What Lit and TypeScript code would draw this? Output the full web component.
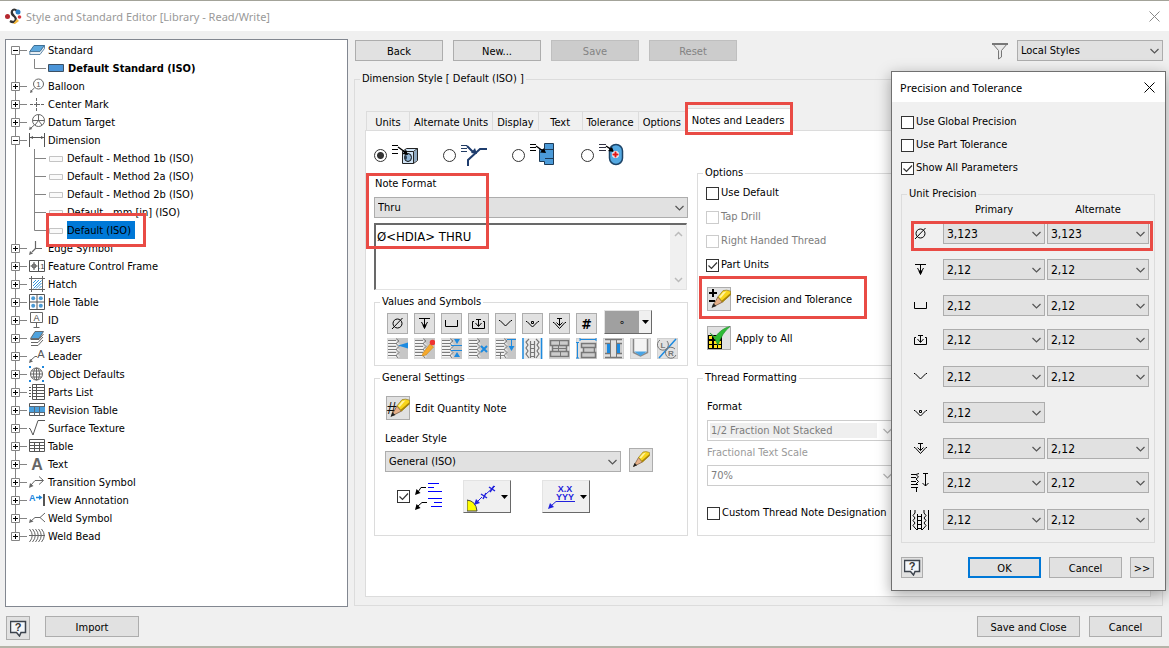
import { LitElement, html, svg, css, nothing } from "lit";
import { customElement, property } from "lit/decorators.js";
import { classMap } from "lit/directives/class-map.js";

/* ---------- icon artwork ---------- */

const treeIcons: Record<string, unknown> = {
  standard: svg`<path d="M5 3.5H15.5L11 9.5H.8Z" fill="#5ea8dd" stroke="#3c6f96"/><path d="M.8 9.5V12.5H11L15.5 6.5V3.5L11 9.5Z" fill="#e8eef3" stroke="#3c6f96" stroke-width=".8"/>`,
  balloon: svg`<g fill="none" stroke="#666"><circle cx="9.5" cy="6" r="5"/><path d="M5.6 9.8L2 13.2"/></g><path d="M1 15l.7-3.3 2.2 2.2z" fill="#666"/><text x="9.5" y="9" text-anchor="middle" font-size="8" fill="#555">1</text>`,
  center: svg`<path d="M1 8.5H4M5 8.5H11M12 8.5H15M7.500 2V5M7.500 6V11M7.500 12V15" stroke="#666" fill="none"/>`,
  datum: svg`<g fill="none" stroke="#666"><circle cx="9.500" cy="6.500" r="6"/><path d="M3.500 6.500H15.500M9.500 .5V6.500L6 11M9.500 6.500L13 11M5.300 11L2 14"/></g><path d="M0 16l.8-3.500 2.400 2.400z" fill="#666"/>`,
  dimension: svg`<path d="M.5 1V15M15.500 1V15M1 5.500H15" stroke="#555" fill="none"/><path d="M1 5.500l3-1.500v3zM15 5.500l-3-1.500v3z" fill="#555"/>`,
  edge: svg`<path d="M6.500 1V8.500H13M6.500 8.500L3 12" stroke="#666" fill="none" stroke-width="1.200"/><path d="M0 15l1-4 3 2.600z" fill="#666"/>`,
  feature: svg`<path d="M.5 2.500H15.500V13.500H.5ZM9.500 2.500V13.500" stroke="#555" fill="#fff"/><path d="M5 4V12M1.500 8H8.500" stroke="#555"/><circle cx="5" cy="8" r="2" fill="none" stroke="#555"/><text x="9" y="11" font-size="8" fill="#444">.1</text>`,
  hatch: svg`<path d="M2.500 0V16M13.500 0V16M0 2.500H16M0 13.500H16" stroke="#666" fill="none"/><path d="M4 7l3-3M4 10l6-6M4.500 12.500l8-8M7 12.500L12.500 7M10 12.500L12.500 10" stroke="#2d93dc"/>`,
  hole: svg`<path d="M.5 .5H15.500V15.500H.5ZM8 .5V15.500M.5 8H15.500" stroke="#555" fill="#fff"/><g fill="#4a9ad6"><circle cx="4.200" cy="4.200" r="2"/><circle cx="11.800" cy="4.200" r="2"/><circle cx="4.200" cy="11.800" r="2"/><circle cx="11.800" cy="11.800" r="2"/></g>`,
  id: svg`<path d="M1.500 .5H13.500V10.500H1.500ZM7.500 10.500V15M4.500 15.500H10.500" stroke="#666" fill="none"/><text x="7.500" y="9" text-anchor="middle" font-size="9" fill="#444">A</text>`,
  layers: svg`<path d="M2 12.500H9L14 7M2 15.500H9L14 10" fill="none" stroke="#666"/><path d="M6 1.500H14.500L10 8.500H1.500Z" fill="#4fa3de" stroke="#555" stroke-width=".8"/><path d="M1.500 9.500H10L14.500 4" fill="none" stroke="#666"/>`,
  leader: svg`<path d="M2 12L6 8.500H8" stroke="#666" fill="none"/><path d="M0 15l1-4 3 2.600z" fill="#666"/><text x="12" y="10" text-anchor="middle" font-size="11" fill="#555">A</text>`,
  object: svg`<g fill="none" stroke="#666"><circle cx="7.500" cy="8" r="6"/><ellipse cx="7.500" cy="8" rx="3" ry="6"/><path d="M7.500 2V14M1.500 8H13.500M2.500 5H12.500M2.500 11H12.500"/></g><path d="M0 0h2v2H0zM13 0h2v2h-2zM0 14h2v2H0zM13 14h2v2h-2z" fill="#1c86dd"/>`,
  parts: svg`<path d="M3.500 .5H15.500V15.500H3.500ZM3.500 3.500H15.500M3.500 6.500H15.500M3.500 9.500H15.500M3.500 12.500H15.500M7.500 .5V15.500" stroke="#555" fill="#fff"/><path d="M0 3.500H2M0 6.500H2M0 9.500H2M0 12.500H2" stroke="#555"/>`,
  revision: svg`<path d="M.5 1.500H15.500V13.500H.5Z" stroke="#555" fill="#fff"/><path d="M0 5h16v5H0z" fill="#4a9fdc"/><path d="M.5 4.500H15.500M.5 10.500H15.500M5.500 4.500V13.500M10.500 4.500V13.500" stroke="#5a6a78"/>`,
  surface: svg`<path d="M0 8.500H1L4 15L9 .5H16" stroke="#555" fill="none"/>`,
  table: svg`<path d="M.5 1.500H15.500V13.500H.5ZM.5 4.500H15.500M.5 7.500H15.500M.5 10.500H15.500M5.500 4.500V13.500M10.500 4.500V13.500" stroke="#555" fill="#fff"/>`,
  text: svg`<text x="8" y="14" text-anchor="middle" font-size="16" font-weight="700" fill="#666">A</text>`,
  transition: svg`<path d="M2 11L6 6.500H14M10 2.500L14.500 6.500L10 10.500" stroke="#666" fill="none"/><path d="M0 14l1-5 3.500 3z" fill="#666"/>`,
  view: svg`<text x="0" y="9" font-size="9" font-weight="700" fill="#1c86dd">A</text><path d="M7 5.500H12" stroke="#1c86dd" stroke-width="1.500"/><path d="M10 3l3.500 2.500L10 8z" fill="#1c86dd"/><path d="M15 2V14" stroke="#555" stroke-width="2"/>`,
  weld: svg`<path d="M2 11L6 7.500H11M16 3L11 7.500L16 12" stroke="#666" fill="none"/><path d="M0 13l1-4 3.500 2.500z" fill="#666"/>`,
  bead: svg`<path d="M0 7.500H16M.5 1Q6 7.500.5 14M3.500 1Q9 7.500 3.500 14M6.500 1Q12 7.500 6.500 14M9.500 1Q15 7.500 9.500 14M12.500 1Q18 7.500 12.500 14" stroke="#666" fill="none"/>`,
  active: svg`<path d="M.5 4.500H15.500V11.500H.5Z" fill="#4a94d8" stroke="#3d5063"/>`,
  idle: svg`<path d="M1.500 6.500H14.500V11.500H1.500Z" fill="#fafafa" stroke="#c4c4c4"/>`,
};

const gdt: Record<string, unknown> = {
  diameter: svg`<circle cx="8.500" cy="8.500" r="4.500"/><path d="M3 14L13.500 3"/>`,
  depth: svg`<path d="M3 3.500H14M8.500 4V13M5.500 7L8.500 12.500L11.500 7"/><path d="M7 10h3l-1.500 3.500z" fill="#000"/>`,
  bore: svg`<path d="M2.500 5V11.500H14.500V5"/>`,
  spot: svg`<path d="M4 6.500H2.500V13.500H14.500V6.500H13M6 4.500H11M8.500 4.500V11M5.500 8L8.500 11.500L11.500 8"/>`,
  sink: svg`<path d="M2 5.500L3 5.500L8.500 11L14 5.500H15"/>`,
  near: svg`<path d="M2 6.500H3L8.500 12L14 6.500H15M7.500 6.500H9.500V8.500H7.500Z"/>`,
  sinkdepth: svg`<path d="M2 7.500H3L8.500 13.500L14 7.500H15M6 3.500H11M8.500 3.500V10.500M5.500 7.500L8.500 10.500L11.500 7.500"/>`,
  thread: svg`<path d="M1 1.500H6L9 .5M1 4.500H6M6 1.500L8.500 4L6 6L8.500 8.500L6 11M1 8.500H6M1 11.500H8M1 14.500H8M6.500 14.500V19M13 .5H18M15.500 .5V13M12.500 10L15.500 13L18.500 10"/>`,
  bolt: svg`<path d="M.5 0V20M18.500 0V20M5 0V3L3 5.500L5 8L3 10.500L5 13L3 15.500L5 18L7 20M14 0V3L16 5.500L14 8L16 10.500L14 13L16 15.500L14 18L12 20M7.500 4V20M11.500 4V20M7.500 6.500H11.500M7.500 10.500H11.500M7.500 14.500H11.500M7.500 18.500H11.500"/>`,
};

const threadBody = svg`<path d="M0 0h21v21H0z" fill="#dedede"/><path d="M10 0h11v21H10l3-2.500-3-3 3-3-3-3 3-3-3-3z" fill="#c6c6c6"/><path d="M1 3h8l2 2-2 2H1zM1 9h8l2 2-2 2H1zM1 15h8l2 2-2 2H1z" fill="#f6f6f6"/><path d="M1 2.500H9M1 5.500H10M1 8.500H9M1 11.500H10M1 14.500H9M1 17.500H10M9 .5L12 3L9 5.500L12 8.500L9 11.500L12 14.500L9 17.500L11 20" fill="none" stroke="#7c7c7c"/>`;
const blueDown = (x: number, y: number) => svg`<path d="M${x - 3} ${y}h6l-3 5z" fill="#1c8ae0"/>`;

const threadIcons = [
  svg`${threadBody}<path d="M11 7.500l10-3v6z" fill="#1c8ae0"/>`,
  svg`${threadBody}<path d="M9 15L16 6l3.500 3L12 17l-4 1z" fill="#f6a92c" stroke="#c98a1b" stroke-width=".6"/><circle cx="18.500" cy="4.500" r="2.800" fill="#e33"/>`,
  svg`${threadBody}<path d="M10 7.500H21M10 12.500H21" stroke="#1c8ae0"/>${blueDown(16, 1)}<path d="M13 19h6l-3-5z" fill="#1c8ae0"/>`,
  svg`${threadBody}<path d="M13 8l6 6M19 8l-6 6" stroke="#1c8ae0" stroke-width="2"/>`,
  svg`${threadBody}<path d="M12 1.500H21M16.500 2V10" stroke="#1c8ae0"/>${blueDown(16.5, 8)}<path d="M5.500 14V21" stroke="#777"/>`,
  svg`<path d="M0 0h21v21H0z" fill="#ececec"/><path d="M1 0V21M19.500 0V21" stroke="#1c8ae0" stroke-width="1.500"/><path d="M7 1L4 4l2 3-2 3 2 3-2 3 3 4M14 1l3 3-2 3 2 3-2 3 2 3-3 4M8.500 3v17M12.500 3v17M8 6.500H13M8 10.500H13M8 14.500H13M8 18.500H13" stroke="#777" stroke-width="1.200" fill="none"/>`,
  svg`<path d="M1.500 2.500H19.500V7.500H1.500ZM3.500 7.500H17.500V13.500H3.500ZM1.500 13.500H19.500V18.500H1.500Z" fill="#ccc" stroke="#777" stroke-width="1.500"/><path d="M10.500 3V7M9.500 8V13M11.500 14V18M4 10.500H17" stroke="#777"/>`,
  svg`<path d="M5.500 5.500H19.500V9.500H5.500ZM7.500 9.500H18.500V14.500H7.500ZM5.500 14.500H19.500V19.500H5.500Z" fill="#ccc" stroke="#777" stroke-width="1.500"/><path d="M4 1.500H20M4 0V3M20 0V3M1.500 4V20M0 4.500H3M0 20H3" stroke="#1c8ae0"/>`,
  svg`<path d="M2 1.500H19M2 5.500H7V15.500H2M19 5.500H14V15.500H19M2 19.500H19" fill="#ccc" stroke="#777" stroke-width="1.500"/><path d="M7.500 2V20M13.500 2V20" stroke="#777"/><path d="M4 6h3v9H4zM14 6h3v9h-3z" fill="#1c8ae0"/>`,
  svg`<path d="M3.500 1V14.500L10.500 18L17.500 14.500V1" fill="#f4f4f4" stroke="#888" stroke-width="1.500"/><path d="M4 13.500h13L10.500 18z" fill="#4aa4e4"/>`,
  svg`<path d="M2 20L19 1" stroke="#1c8ae0" stroke-width="1.500"/><g fill="none" stroke="#777"><path d="M3 2a5.500 5.500 0 1 0 7 1"/><path d="M18 11a5.500 5.500 0 1 0 1 6"/></g><text x="3.500" y="10" font-size="8" font-weight="700" fill="#777">L</text><text x="11" y="18" font-size="8" font-weight="700" fill="#777">R</text>`,
];

const pencil = svg`<path d="M9.500 9.500L4.500 18.500L13.500 14Z" fill="#e8b088" stroke="#7a5a3c" stroke-width=".7"/><path d="M9.500 9.500L14 4Q17 3 20.500 4.500V7.500L13.500 14Z" fill="#f8d51c" stroke="#8a7420" stroke-width=".6"/><path d="M12.500 13L20.500 6V8L13.500 14.200Z" fill="#a8850c"/><path d="M14 5.500L17 4.500L12 10.500L10.500 9.500Z" fill="#fff3a0"/><path d="M4 19l1.500-4 2.700 2.300z" fill="#222"/>`;
const bigPencil = svg`<g transform="translate(0 -1) scale(1.15)">${pencil}</g>`;

const noteTypes = [
  svg`<path d="M0 2.500H6M0 6.500H6M0 10.500H6" stroke="#000"/><path d="M10.500 8.500V20.500H21.500L25.500 17.500V5.500H14.500L10.500 8.500Z" fill="#cfe3f5" stroke="#222"/><path d="M10.500 8.500H21.500V20.500M21.500 8.500L25.500 5.500" fill="none" stroke="#222"/><path d="M22 9l3-2.500V17l-3 2.500z" fill="#8fa9c0"/><ellipse cx="16" cy="14.500" rx="3.500" ry="4" fill="#8fb4d6" stroke="#111"/><path d="M14 12a3 3 0 0 0 0 5q2-2.500 0-5z" fill="#2c3f52"/><path d="M6 4L13 9" stroke="#000" stroke-width="1.500"/><path d="M16 12l-5.500-1L14 6.500z" fill="#000"/>`,
  svg`<path d="M0 2.500H6M0 5.500H6M0 8.500H6" stroke="#223c63"/><path d="M7 23V17L19 6H26M6 3L12 9" stroke="#1f3d6e" stroke-width="2" fill="none"/><path d="M16 11l-6-1 4-5z" fill="#1f3d6e"/>`,
  svg`<path d="M14.500 .5H23.500V21.500H14.500V18.500H9.500V6.500H14.500Z" fill="#4b9ad8" stroke="#1d3a56"/><path d="M15 6.500H23M15 15.500H23" stroke="#1d3a56"/><path d="M0 1.500H6M0 4.500H6M0 7.500H6" stroke="#000"/><path d="M6 3L13 8" stroke="#000" stroke-width="1.500"/><path d="M16 10l-6-.5 4-4.500z" fill="#000"/>`,
  svg`<rect x="10.500" y="1.500" width="13" height="20" rx="6.500" fill="#54a9e2" stroke="#1d4468" stroke-width="1.500"/><path d="M0 1.500H7M0 4.500H7M0 7.500H7" stroke="#334"/><path d="M7 3L13 7" stroke="#000" stroke-width="1.500"/><path d="M15 9l-6-1 4-4z" fill="#000"/><path d="M13 11.500h7M16.500 8v7" stroke="#fff" stroke-width="4"/><path d="M13.500 11.500h6M16.500 8.500v6" stroke="#e01818" stroke-width="2"/>`,
];

const pic = (w: number, h: number, body: unknown) =>
  html`<svg width=${w} height=${h} viewBox="0 0 ${w} ${h}" aria-hidden="true">${body}</svg>`;
const sym = (name: string, w = 17, h = 17) =>
  html`<svg class="sym" width=${w} height=${h} viewBox="0 0 ${w} ${h}" aria-hidden="true">${gdt[name]}</svg>`;
const helpIcon = pic(17, 17, svg`<path d="M.5 1.500H15.500V12.500H11L9.500 16L6.500 12.500H.5Z" fill="#f3f6fa" stroke="#3c434d" stroke-width="1.500"/><text x="8" y="11" text-anchor="middle" font-size="11" font-weight="700" fill="#333">?</text>`);
const closeIcon = pic(11, 11, svg`<path d="M.5 .5L10.500 10.500M10.500 .5L.5 10.500" stroke="currentColor"/>`);
const triangle = pic(7, 4, svg`<path d="M0 0h7L3.500 4z" fill="#000"/>`);

/* ---------- shared rules ---------- */

const shared = css`
  * { box-sizing: border-box; }
  svg { display: block; flex: none; }
  svg text { font-family: "Liberation Sans", Arial, sans-serif; }
  .sym { fill: none; stroke: #000; stroke-width: 1; }
  button, input, select, textarea { font: inherit; color: inherit; margin: 0; }
  button {
    display: flex; align-items: center; justify-content: center;
    padding: 0; border: 1px solid #adadad; background: #e1e1e1; border-radius: 0;
  }
  button.word { padding-top: 2px; }
  button:disabled { background: #cccccc; border-color: #bfbfbf; color: #838383; }
  fieldset { --pad: 0px; margin: 0; min-width: 0; padding: 0 0 0 var(--pad); border: 1px solid #dcdcdc; }
  legend { margin-left: calc(5px - var(--pad)); padding: 0 2px; line-height: 14px; }
  .check { display: flex; align-items: center; gap: 2px; line-height: 14px; white-space: nowrap; }
  .check.off { color: #7d7d7d; }
  .check input, .tick {
    appearance: none; width: 13px; height: 13px; flex: none;
    border: 1px solid #333; background: #fff; border-radius: 0;
  }
  .check input:disabled { border-color: #cccccc; }
  .check input:checked, .tick:checked {
    background: #fff url("data:image/svg+xml,%3Csvg xmlns='http://www.w3.org/2000/svg' width='11' height='11'%3E%3Cpath d='M1.500 5.500L4.500 8.500L10 2.500' fill='none' stroke='%23333' stroke-width='1.200'/%3E%3C/svg%3E") center no-repeat;
  }
  .mark { position: absolute; border: 3px solid #e94b45; pointer-events: none; z-index: 2; }
`;

@customElement("combo-box")
export class ComboBox extends LitElement {
  @property() value = "";
  @property() label = "";
  @property({ type: Boolean }) off = false;
  @property({ type: Boolean }) shaded = false;

  static styles = [shared, css`
    :host { display: grid; align-items: center; height: 21px; }
    select, svg { grid-area: 1 / 1; }
    select {
      appearance: none; width: 100%; height: 100%; padding: 0 20px 0 3px;
      border: 1px solid #adadad; border-radius: 0; background: #e1e1e1; color: #000;
    }
    svg { justify-self: end; margin-right: 4px; pointer-events: none; }
    select:disabled { background: #fff; border-color: #cccccc; color: #7d7d7d; opacity: 1; }
    select.shaded:disabled { background: linear-gradient(#efefef, #efefef) 2px 2px / calc(100% - 20px) calc(100% - 4px) no-repeat #fff; }
  `];

  render() {
    return html`
      <select class=${classMap({ shaded: this.shaded })} aria-label=${this.label} ?disabled=${this.off}><option>${this.value}</option></select>
      ${pic(9, 6, svg`<path d="M.5 1L4.500 5L8.500 1" fill="none" stroke=${this.off ? "#b5b5b5" : "#555"} stroke-width="1.200"/>`)}
    `;
  }
}

/* ---------- style browser tree ---------- */

interface Branch { name: string; icon: string; children?: string[]; }

const branches: Branch[] = [
  { name: "Standard", icon: "standard", children: ["Default Standard (ISO)"] },
  { name: "Balloon", icon: "balloon" },
  { name: "Center Mark", icon: "center" },
  { name: "Datum Target", icon: "datum" },
  {
    name: "Dimension", icon: "dimension",
    children: ["Default - Method 1b (ISO)", "Default - Method 2a (ISO)", "Default - Method 2b (ISO)", "Default - mm [in] (ISO)", "Default (ISO)"],
  },
  { name: "Edge Symbol", icon: "edge" },
  { name: "Feature Control Frame", icon: "feature" },
  { name: "Hatch", icon: "hatch" },
  { name: "Hole Table", icon: "hole" },
  { name: "ID", icon: "id" },
  { name: "Layers", icon: "layers" },
  { name: "Leader", icon: "leader" },
  { name: "Object Defaults", icon: "object" },
  { name: "Parts List", icon: "parts" },
  { name: "Revision Table", icon: "revision" },
  { name: "Surface Texture", icon: "surface" },
  { name: "Table", icon: "table" },
  { name: "Text", icon: "text" },
  { name: "Transition Symbol", icon: "transition" },
  { name: "View Annotation", icon: "view" },
  { name: "Weld Symbol", icon: "weld" },
  { name: "Weld Bead", icon: "bead" },
];

@customElement("style-tree")
export class StyleTree extends LitElement {
  static styles = [shared, css`
    :host { display: block; border: 1px solid #828790; background: #fff; padding: 1px 0 0 5px; }
    ul { list-style: none; margin: 0; padding: 0; }
    .row { display: flex; align-items: center; height: 18px; white-space: nowrap; }
    .name { position: relative; padding: 2px 3px 0 0; margin-left: 3px; line-height: 16px; }
    .bold { font-weight: 700; margin-left: 4px; }
    .picked { background: #0078d7; padding-right: 4px; }
    .mark { inset: -8px -11px -8px -21px; }
  `];

  private trunk(open: boolean, first: boolean, last: boolean) {
    return pic(18, 18, svg`
      <path d="M4.500 ${first ? 9 : 0}V${last ? 9 : 18}M9 9.500H16" stroke="#848484"/>
      <path d="M.5 5.500H8.500V13.500H.5Z" fill="#fff" stroke="#848484"/>
      <path d=${open ? "M2 9.500H7" : "M2 9.500H7M4.500 7V12"} stroke="#000"/>`);
  }

  private twig(last: boolean) {
    return pic(37, 18, svg`<path d="M4.500 0V18M23.500 0V${last ? 9.5 : 18}M23.500 9.500H35" fill="none" stroke="#848484"/>`);
  }

  render() {
    return html`<ul>${branches.map((b, i) => html`
      <li>
        <div class="row">
          ${this.trunk(!!b.children, i === 0, i === branches.length - 1)}
          ${pic(16, 16, treeIcons[b.icon])}
          <span class="name">${b.name}</span>
        </div>
        ${b.children ? html`<ul>${b.children.map((c, j) => {
          const picked = c === "Default (ISO)";
          return html`<li class="row">
            ${this.twig(j === b.children!.length - 1)}
            ${pic(16, 16, treeIcons[i === 0 ? "active" : "idle"])}
            <span class=${classMap({ name: true, bold: i === 0, picked })}>${c}${picked ? html`<span class="mark"></span>` : nothing}</span>
          </li>`;
        })}</ul>` : nothing}
      </li>`)}</ul>`;
  }
}

/* ---------- notes and leaders page ---------- */

@customElement("notes-page")
export class NotesPage extends LitElement {
  static styles = [shared, css`
    :host { display: grid; grid-template-columns: 314px 210px; gap: 9px; align-items: start; padding: 11px 8px 0; }
    .column { display: flex; flex-direction: column; gap: 5px; }
    .types { display: flex; height: 26px; margin-bottom: 3px; }
    .types label { display: flex; align-items: center; gap: 5px; width: 69px; }
    .types input {
      appearance: none; width: 13px; height: 13px; border: 1px solid #333; border-radius: 50%; background: #fff;
    }
    .types input:checked { background: radial-gradient(circle, #333 0 3px, #fff 4px); }
    .format { position: relative; display: flex; flex-direction: column; gap: 5px; }
    .format > label { padding-left: 1px; line-height: 16px; }
    .format .mark { left: -8px; top: -3px; width: 123px; height: 76px; }
    .memo { display: flex; height: 67px; margin-right: 1px; border: 1px solid #e3e3e3; border-top: 2px solid #696969; border-left: 2px solid #696969; }
    .memo textarea { flex: 1; min-width: 0; border: 0; padding: 2px 1px; resize: none; outline: none; overflow: hidden; font-size: 13px; line-height: 20px; background: #fff; }
    .bar { display: flex; flex-direction: column; justify-content: space-between; align-items: center; width: 16px; padding: 6px 0; background: #f0f0f0; }
    .values { --pad: 12px; padding-top: 1px; padding-bottom: 6px; }
    .strip { display: flex; gap: 6px; align-items: end; }
    .strip + .strip { margin-top: 4px; }
    .strip button { width: 21px; height: 21px; }
    .strip button.flat { border-color: #d0d0d0; }
    .strip .hash { font-size: 14px; font-weight: 700; }
    .strip .picker { width: 48px; height: 24px; margin-left: 1px; justify-content: space-between; background: #a0a0a0; border: 1px solid #696969; border-left-color: #e3e3e3; border-top-color: #e3e3e3; }
    .picker span:first-child { flex: 1; }
    .picker span:last-child { display: grid; place-items: center; width: 12px; height: 100%; background: #f0f0f0; }
    .format > label + combo-box { margin-top: 0; }
    .general { --pad: 10px; height: 165px; }
    .tool { display: flex; align-items: center; gap: 5px; height: 24px; white-space: nowrap; }
    .tool label { line-height: 14px; padding-top: 2px; }
    .square { width: 24px; height: 24px; flex: none; }
    .general .tool { margin: 11px 0 0 1px; }
    .general .caption { display: block; margin-top: 12px; line-height: 14px; }
    .leader { display: flex; align-items: end; gap: 8px; margin-top: 2px; }
    .leader combo-box { width: 236px; }
    .arrows { display: flex; align-items: center; margin-top: 8px; padding-left: 12px; }
    .arrows svg.lines { margin-left: 4px; }
    .drop { width: 48px; height: 33px; gap: 4px; background: #f0f0f0; border: 1px solid #e3e3e3; border-right: 1px solid #696969; border-bottom: 1px solid #696969; }
    .drop.a { margin-left: 20px; }
    .drop.b { margin-left: 31px; }
    .side { padding-top: 24px; }
    .options { --pad: 8px; height: 200px; }
    .options .check, .thread .check { height: 14px; }
    .options .check + .check { margin-top: 10px; }
    .options .check:first-of-type { margin-top: 6px; }
    .options .tool { position: relative; margin: 15px 0 0 1px; }
    .options .mark { left: -8px; top: -11px; width: 168px; height: 43px; }
    .thread { --pad: 9px; height: 165px; padding-top: 15px; }
    .thread > * { width: 189px; }
    .thread legend { width: auto; }
    .thread span { display: block; line-height: 14px; }
    .thread .dim { color: #9a9a9a; margin: 5px 0 5px; }
    .thread .lead { margin-bottom: 6px; }
    .thread .check { margin-top: 20px; }
  `];

  render() {
    const symbols = ["diameter", "depth", "bore", "spot", "sink", "near", "sinkdepth"];
    return html`
      <div class="column">
        <div class="types">
          ${noteTypes.map((t, i) => html`<label><input type="radio" name="kind" aria-label="Note type ${i + 1}" ?checked=${i === 0}>${pic(27, 24, t)}</label>`)}
        </div>
        <div class="format">
          <label>Note Format</label>
          <combo-box value="Thru" label="Note Format"></combo-box>
          <div class="memo">
            <textarea aria-label="Note text" .value=${"Ø<HDIA> THRU"}></textarea>
            <div class="bar">
              ${pic(9, 6, svg`<path d="M1 5L4.500 1.500L8 5" fill="none" stroke="#bbb" stroke-width="1.500"/>`)}
              ${pic(9, 6, svg`<path d="M1 1L4.500 4.500L8 1" fill="none" stroke="#bbb" stroke-width="1.500"/>`)}
            </div>
          </div>
          <span class="mark"></span>
        </div>
        <fieldset class="values">
          <legend>Values and Symbols</legend>
          <div class="strip">
            ${symbols.map((s) => html`<button aria-label=${s}>${sym(s)}</button>`)}
            <button class="hash">#</button>
            <button class="picker" aria-label="Symbol"><span>∘</span><span>${triangle}</span></button>
          </div>
          <div class="strip">
            ${threadIcons.map((t, i) => html`<button class="flat" aria-label="Thread value ${i + 1}">${pic(21, 21, t)}</button>`)}
          </div>
        </fieldset>
        <fieldset class="general">
          <legend>General Settings</legend>
          <div class="tool">
            <button class="square" id="qty" aria-label="Edit Quantity Note">${pic(24, 24, svg`<text x="1" y="18" font-size="17" fill="#111">#</text>${bigPencil}`)}</button>
            <label for="qty">Edit Quantity Note</label>
          </div>
          <span class="caption">Leader Style</span>
          <div class="leader">
            <combo-box value="General (ISO)" label="Leader Style"></combo-box>
            <button class="square" aria-label="Edit leader style">${pic(24, 24, pencil)}</button>
          </div>
          <div class="arrows">
            <input class="tick" type="checkbox" checked aria-label="Leader text alignment">
            <svg class="lines" width="29" height="30" viewBox="0 0 29 30" aria-hidden="true">
              <path d="M14 1.500H25M14 5.500H20M14 9.500H28M14 16.500H28M20 20.500H28M17 24.500H28" stroke="#00f"/>
              <path d="M4 10L7 5.500H12M4 24L8 20.500H13" stroke="#000" fill="none"/>
              <path d="M1 13l1.500-6 4 4zM1 28l1.500-6 4 4z" fill="#000"/>
            </svg>
            <button class="drop a" aria-label="Leader placement">
              ${pic(30, 30, svg`<path d="M0 18q9 1 10 11H0z" fill="#ff0" stroke="#444"/><path d="M10 20L15 15M19 12L28 4" stroke="#22d"/><path d="M7 23l2-6 4 4z" fill="#22d"/><path d="M14 12l6 4M19 11l-3 6M22 5l6 4M27 4l-4 6" stroke="#22d" stroke-width="1.500"/>`)}
              ${triangle}
            </button>
            <button class="drop b" aria-label="Text placement">
              ${pic(30, 30, svg`<text x="19" y="10" text-anchor="middle" font-size="9" font-weight="700" fill="#22d">X.X</text><text x="19" y="18" text-anchor="middle" font-size="9" font-weight="700" fill="#22d">YYY</text><path d="M29 19.500H10L5 24" stroke="#22d" fill="none"/><path d="M2 27l2-6 4 4z" fill="#22d"/>`)}
              ${triangle}
            </button>
          </div>
        </fieldset>
      </div>
      <div class="column side">
        <fieldset class="options">
          <legend>Options</legend>
          <label class="check"><input type="checkbox">Use Default</label>
          <label class="check off"><input type="checkbox" disabled>Tap Drill</label>
          <label class="check off"><input type="checkbox" disabled>Right Handed Thread</label>
          <label class="check"><input type="checkbox" checked>Part Units</label>
          <div class="tool">
            <button class="square" id="prec" aria-label="Precision and Tolerance">${pic(24, 24, svg`<path d="M2 6H10M6 2V10M2 14H8" stroke="#000" stroke-width="2"/>${bigPencil}`)}</button>
            <label for="prec">Precision and Tolerance</label>
            <span class="mark"></span>
          </div>
          <div class="tool">
            <button class="square" id="all" aria-label="Apply to All">${pic(24, 24, svg`
              <path d="M1 9h14v14H1z" fill="#000"/>
              <path d="M2 10h3v3H2zM7 10h3v3H7zM2 15h3v3H2zM7 15h3v3H7zM11 15h3v3h-3zM2 19h3v3H2zM7 19h3v3H7zM11 19h3v3h-3z" fill="#ffe21f"/>
              <path d="M3 7l5 4Q15 2 23 .5 15 7 11 19 8 12 3 7z" fill="#2dbb35" stroke="#1e8f2a" stroke-width=".6"/>`)}</button>
            <label for="all">Apply to All</label>
          </div>
        </fieldset>
        <fieldset class="thread">
          <legend>Thread Formatting</legend>
          <span class="lead">Format</span>
          <combo-box off shaded value="1/2 Fraction Not Stacked" label="Format"></combo-box>
          <span class="dim">Fractional Text Scale</span>
          <combo-box off value="70%" label="Fractional Text Scale"></combo-box>
          <label class="check"><input type="checkbox">Custom Thread Note Designation</label>
        </fieldset>
      </div>
    `;
  }
}

/* ---------- precision dialog ---------- */

@customElement("precision-dialog")
export class PrecisionDialog extends LitElement {
  static styles = [shared, css`
    :host { display: block; background: #f0f0f0; border: 1px solid #707070; box-shadow: 0 4px 14px rgba(0, 0, 0, 0.35); }
    header { display: flex; align-items: center; justify-content: space-between; height: 30px; padding: 0 10px 0 8px; background: #fff; font-family: "Noto Sans", sans-serif; }
    header button { border: 0; background: none; }
    .flags { display: flex; flex-direction: column; gap: 9px; padding: 13px 9px 12px; }
    fieldset { margin: 0 10px 0 9px; }
    .grid {
      position: relative; display: grid; grid-template-columns: 31px 102px 102px; column-gap: 2px;
      grid-template-rows: 20px repeat(2, 36px 36px 34px 37px) 33px; padding: 2px 5px 0 8px;
    }
    .head { text-align: center; line-height: 14px; }
    .pad { display: flex; align-items: center; height: 21px; }
    .pad svg { margin-left: 2px; }
    .pad svg.wide { margin-left: 0; }
    .grid combo-box { height: 21px; font-size: 12px; }
    .grid .mark { left: 9px; right: 1px; top: 20px; height: 30px; }
    footer { display: flex; gap: 8px; padding: 14px 11px 12px 9px; }
    footer button { width: 73px; height: 21px; }
    footer .help { width: 22px; margin-right: auto; }
    footer .ok { border: 2px solid #0078d7; }
    footer .more { width: 24px; }
  `];

  render() {
    const rows: [string, string, string?][] = [
      ["diameter", "3,123", "3,123"], ["depth", "2,12", "2,12"], ["bore", "2,12", "2,12"],
      ["spot", "2,12", "2,12"], ["sink", "2,12", "2,12"], ["near", "2,12"],
      ["sinkdepth", "2,12", "2,12"], ["thread", "2,12", "2,12"], ["bolt", "2,12", "2,12"],
    ];
    return html`
      <header><span>Precision and Tolerance</span><button aria-label="Close">${closeIcon}</button></header>
      <div class="flags">
        <label class="check"><input type="checkbox">Use Global Precision</label>
        <label class="check"><input type="checkbox">Use Part Tolerance</label>
        <label class="check"><input type="checkbox" checked>Show All Parameters</label>
      </div>
      <fieldset>
        <legend>Unit Precision</legend>
        <div class="grid">
          <span></span><span class="head">Primary</span><span class="head">Alternate</span>
          ${rows.map(([name, a, b]) => {
            const wide = name === "thread" || name === "bolt";
            return html`
              <span class="pad">${wide
                ? html`<svg class="sym wide" width="19" height="20" viewBox="0 0 19 20" aria-hidden="true">${gdt[name]}</svg>`
                : sym(name)}</span>
              <combo-box value=${a} label="Primary ${name}"></combo-box>
              ${b ? html`<combo-box value=${b} label="Alternate ${name}"></combo-box>` : html`<span></span>`}`;
          })}
          <span class="mark"></span>
        </div>
      </fieldset>
      <footer>
        <button class="help" aria-label="Help">${helpIcon}</button>
        <button class="word ok">OK</button>
        <button class="word">Cancel</button>
        <button class="word more">&gt;&gt;</button>
      </footer>
    `;
  }
}

/* ---------- window ---------- */

@customElement("app-root")
export class AppRoot extends LitElement {
  static styles = [shared, css`
    :host {
      position: relative; display: flex; flex-direction: column; min-height: 100vh; box-sizing: border-box;
      background: #f0f0f0; border-top: 1px solid #a3a399; border-bottom: 2px solid #b4b4a8; color: #000;
      font-family: "DejaVu Sans Condensed", "DejaVu Sans", sans-serif; font-size: 11px;
    }
    .title { display: flex; align-items: center; height: 30px; padding: 0 9px 0 5px; gap: 4px; background: #fff; color: #999; font-family: "Noto Sans", sans-serif; }
    .title span { flex: 1; }
    .title button { border: 0; background: none; color: #888; }
    main { flex: 1; display: grid; grid-template-columns: minmax(200px, 343px) minmax(0, 1fr); gap: 6px; padding: 8px 6px 0 5px; }
    .editor { display: flex; flex-direction: column; padding-bottom: 1px; }
    .bar { display: flex; gap: 10px; height: 22px; margin-bottom: 11px; align-items: end; padding-left: 1px; }
    .bar button { width: 88px; height: 21px; }
    .filter { display: flex; align-items: center; gap: 8px; margin-left: auto; }
    .filter combo-box { width: 146px; }
    .style { --pad: 10px; flex: 1; display: flex; flex-direction: column; padding-top: 22px; padding-right: 11px; padding-bottom: 8px; }
    .tabs { display: flex; align-items: end; height: 22px; padding-left: 1px; }
    .tabs button { height: 19px; min-width: 44px; padding: 2px 4px 0; border: 1px solid #dcdcdc; border-left-width: 0; border-bottom: 0; background: #f0f0f0; white-space: nowrap; }
    .tabs button:first-child { border-left-width: 1px; }
    .tabs .on { position: relative; height: 22px; padding: 2px 6px 0; background: #fff; }
    .tabs .mark { inset: -7px -3px -5px -1px; }
    .sheet { flex: 1; border: 1px solid #dcdcdc; background: #fff; }
    .actions { display: flex; gap: 9px; padding: 9px 7px 6px 6px; align-items: start; }
    .actions button { width: 73px; height: 21px; }
    .actions .help { width: 24px; height: 24px; }
    .actions .import { width: 94px; margin-left: 6px; margin-right: auto; }
    .actions .save { width: 103px; }
    precision-dialog { position: absolute; top: 70px; right: 3px; width: 275px; z-index: 3; }
  `];

  render() {
    const tabs = ["Units", "Alternate Units", "Display", "Text", "Tolerance", "Options"];
    return html`
      <header class="title">
        ${pic(17, 17, svg`<path d="M12 3Q9 0 7 3 6 6 9 8 12 11 10 13 8 15 5 13" fill="none" stroke="#333" stroke-width="2.200"/><circle cx="2.500" cy="8.500" r="2.500" fill="#b5282f"/><circle cx="13" cy="4" r="2.500" fill="#2b7fc4"/><circle cx="14.500" cy="9" r="1.800" fill="#d8343a"/><path d="M8 16l4-5 2 2-4 3z" fill="#f4b73a"/>`)}
        <span>Style and Standard Editor [Library - Read/Write]</span>
        <button aria-label="Close">${closeIcon}</button>
      </header>
      <main>
        <style-tree></style-tree>
        <section class="editor">
          <div class="bar">
            <button class="word">Back</button><button class="word">New...</button><button class="word" disabled>Save</button><button class="word" disabled>Reset</button>
            <div class="filter">
              ${pic(18, 18, svg`<path d="M1.500 1.500H16.500L10.500 8.500V15L7.500 17V8.500Z" fill="#e9e9e9" stroke="#777"/><path d="M1 2H17" stroke="#777" stroke-width="2"/>`)}
              <combo-box value="Local Styles" label="Style filter"></combo-box>
            </div>
          </div>
          <fieldset class="style">
            <legend>Dimension Style [ Default (ISO) ]</legend>
            <div class="tabs" role="tablist">
              ${tabs.map((t) => html`<button role="tab">${t}</button>`)}
              <button role="tab" class="on" aria-selected="true">Notes and Leaders<span class="mark"></span></button>
            </div>
            <div class="sheet"><notes-page></notes-page></div>
          </fieldset>
        </section>
      </main>
      <footer class="actions">
        <button class="help" aria-label="Help">${helpIcon}</button>
        <button class="word import">Import</button>
        <button class="word save">Save and Close</button>
        <button class="word">Cancel</button>
      </footer>
      <precision-dialog></precision-dialog>
    `;
  }
}
